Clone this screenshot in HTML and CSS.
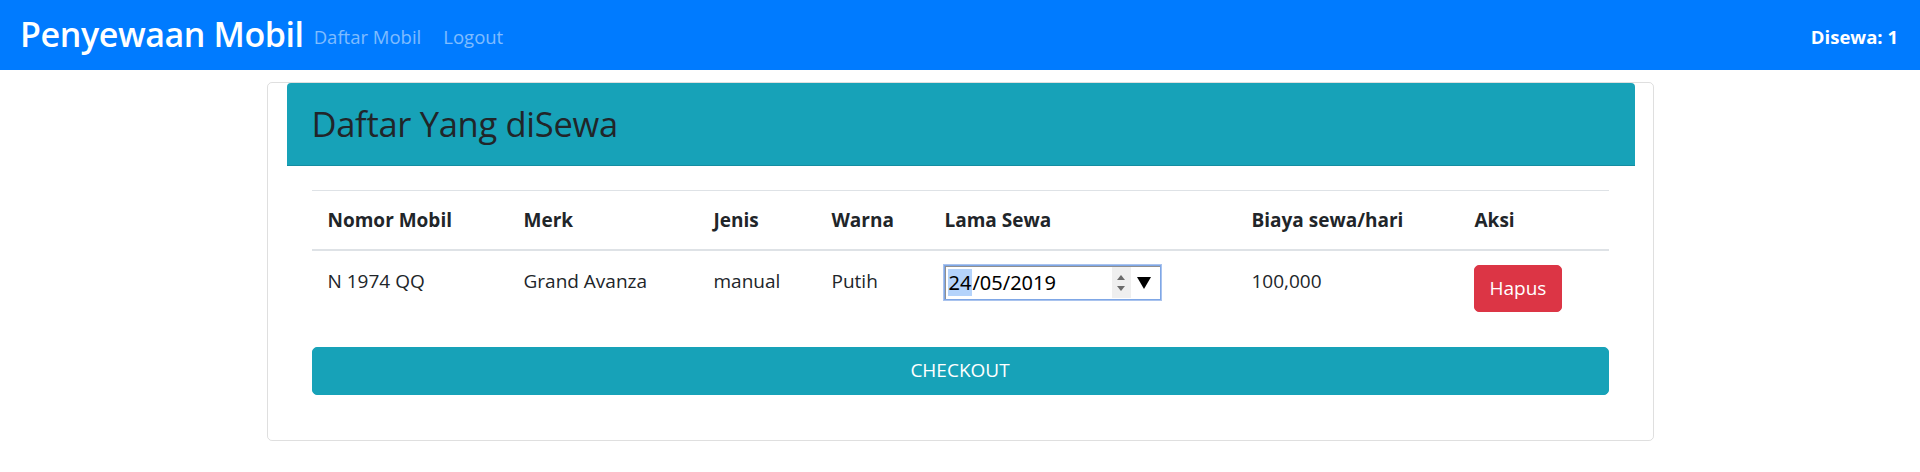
FILE: index.html
```html
<!DOCTYPE html>
<html lang="id">
<head>
<meta charset="utf-8">
<title>Penyewaan Mobil</title>
<link rel="stylesheet" href="styles.css">
</head>
<body>
<nav class="navbar">
  <a class="brand" href="#">Penyewaan Mobil</a>
  <a class="nav-link" href="#">Daftar Mobil</a>
  <a class="nav-link" href="#">Logout</a>
  <span class="count">Disewa: 1</span>
</nav>
<main class="card">
  <div class="inner">
    <div class="card-header">
      <h3 class="title">Daftar Yang diSewa</h3>
    </div>
    <div class="card-body">
      <table class="table">
        <colgroup>
          <col class="c1"><col class="c2"><col class="c3"><col class="c4"><col class="c5"><col class="c6"><col class="c7">
        </colgroup>
        <thead>
          <tr>
            <th>Nomor Mobil</th>
            <th>Merk</th>
            <th>Jenis</th>
            <th>Warna</th>
            <th>Lama Sewa</th>
            <th>Biaya sewa/hari</th>
            <th>Aksi</th>
          </tr>
        </thead>
        <tbody>
          <tr>
            <td>N 1974 QQ</td>
            <td>Grand Avanza</td>
            <td>manual</td>
            <td>Putih</td>
            <td>
              <div class="date-input">
                <span class="date-text"><span class="sel">24</span>/05/2019</span>
                <span class="spin"><span class="up"></span><span class="down"></span></span>
                <span class="drop"></span>
              </div>
            </td>
            <td>100,000</td>
            <td><button class="btn-danger" type="button">Hapus</button></td>
          </tr>
        </tbody>
      </table>
      <button class="btn-checkout" type="button">CHECKOUT</button>
    </div>
  </div>
</main>
</body>
</html>
```

FILE: styles.css
```css
* { box-sizing: border-box; }
html, body { margin: 0; padding: 0; background: #fff; }
body {
  font-family: "Open Sans", "Noto Sans", sans-serif;
  font-size: 19px;
  line-height: 30px;
  color: #212529;
}

.navbar {
  height: 70px;
  background: #007bff;
  display: flex;
  align-items: center;
  padding: 0 22px 0 20px;
}
.brand {
  color: #fff;
  text-decoration: none;
  font-size: 34px;
  font-weight: 600;
  line-height: 44px;
  letter-spacing: -0.4px;
  margin-right: 10px;
  padding-bottom: 2px;
}
.nav-link {
  color: rgba(255, 255, 255, 0.5);
  text-decoration: none;
  font-size: 18.5px;
  margin-right: 22px;
  padding-top: 4px;
}
.count {
  margin-left: auto;
  color: #fff;
  font-weight: 700;
  font-size: 18.5px;
  padding-top: 4px;
}

.card {
  display: block;
  width: 1387px;
  margin: 12px auto 0;
  border: 1px solid rgba(0, 0, 0, 0.125);
  border-radius: 5px;
}
.inner { padding: 0 18px 0 19px; }
.card-header {
  background: #17a2b8;
  height: 83px;
  border-bottom: 1px solid rgba(0, 0, 0, 0.125);
  border-radius: 4px 4px 0 0;
  display: flex;
  align-items: center;
  padding-left: 25px;
}
.title {
  margin: 0;
  font-size: 34.5px;
  font-weight: 500;
  line-height: 40px;
  color: #212529;
  letter-spacing: -0.3px;
}
.card-body { padding: 24px 26px 45px 25px; }

.table {
  width: 1297px;
  border-collapse: collapse;
  table-layout: fixed;
  margin-bottom: 20px;
}
.c1 { width: 196px; }
.c2 { width: 190px; }
.c3 { width: 118px; }
.c4 { width: 113px; }
.c5 { width: 307px; }
.c6 { width: 223px; }
.c7 { width: 150px; }
.table th {
  text-align: left;
  font-weight: 700;
  padding: 14px 16px 14px;
  border-top: 1px solid #dee2e6;
  border-bottom: 2px solid #dee2e6;
  vertical-align: top;
}
.table td {
  padding: 15px 16px 15px;
  vertical-align: top;
}

.date-input {
  width: 217px;
  height: 35px;
  margin-left: -1px;
  margin-top: -1px;
  border: 1px solid #7fa7e6;
  box-shadow: inset 1px 1px 0 #8f8f8f, 0 0 0 1px #a9c3ee;
  display: flex;
  align-items: center;
  background: #fff;
  padding: 0 2px 0 3px;
  font-family: "Noto Sans", "Open Sans", sans-serif;
  font-size: 20px;
}
.date-text { flex: 1; line-height: 30px; color: #000; }
.sel { background: #b4d3fb; padding: 0 1px; }
.spin {
  width: 19px;
  height: 31px;
  background: #efefef;
  display: flex;
  flex-direction: column;
  align-items: center;
  justify-content: center;
  gap: 6px;
}
.up, .down { width: 0; height: 0; border-left: 4px solid transparent; border-right: 4px solid transparent; }
.up { border-bottom: 5px solid #6b6b6b; }
.down { border-top: 5px solid #6b6b6b; }
.drop {
  width: 0; height: 0;
  margin: 0 7px 0 6px;
  border-left: 7px solid transparent;
  border-right: 7px solid transparent;
  border-top: 12px solid #000;
}

.btn-danger {
  font-family: inherit;
  font-size: 19px;
  line-height: 30px;
  color: #fff;
  background: #dc3545;
  border: 1px solid #dc3545;
  border-radius: 5px;
  padding: 7px 15px 8px;
  margin-left: -1px;
  margin-top: -1px;
}
.btn-checkout {
  display: block;
  width: 1297px;
  font-family: inherit;
  font-size: 19px;
  line-height: 30px;
  color: #fff;
  background: #17a2b8;
  border: 1px solid #17a2b8;
  border-radius: 5px;
  padding: 7px 15px 9px;
}
```
